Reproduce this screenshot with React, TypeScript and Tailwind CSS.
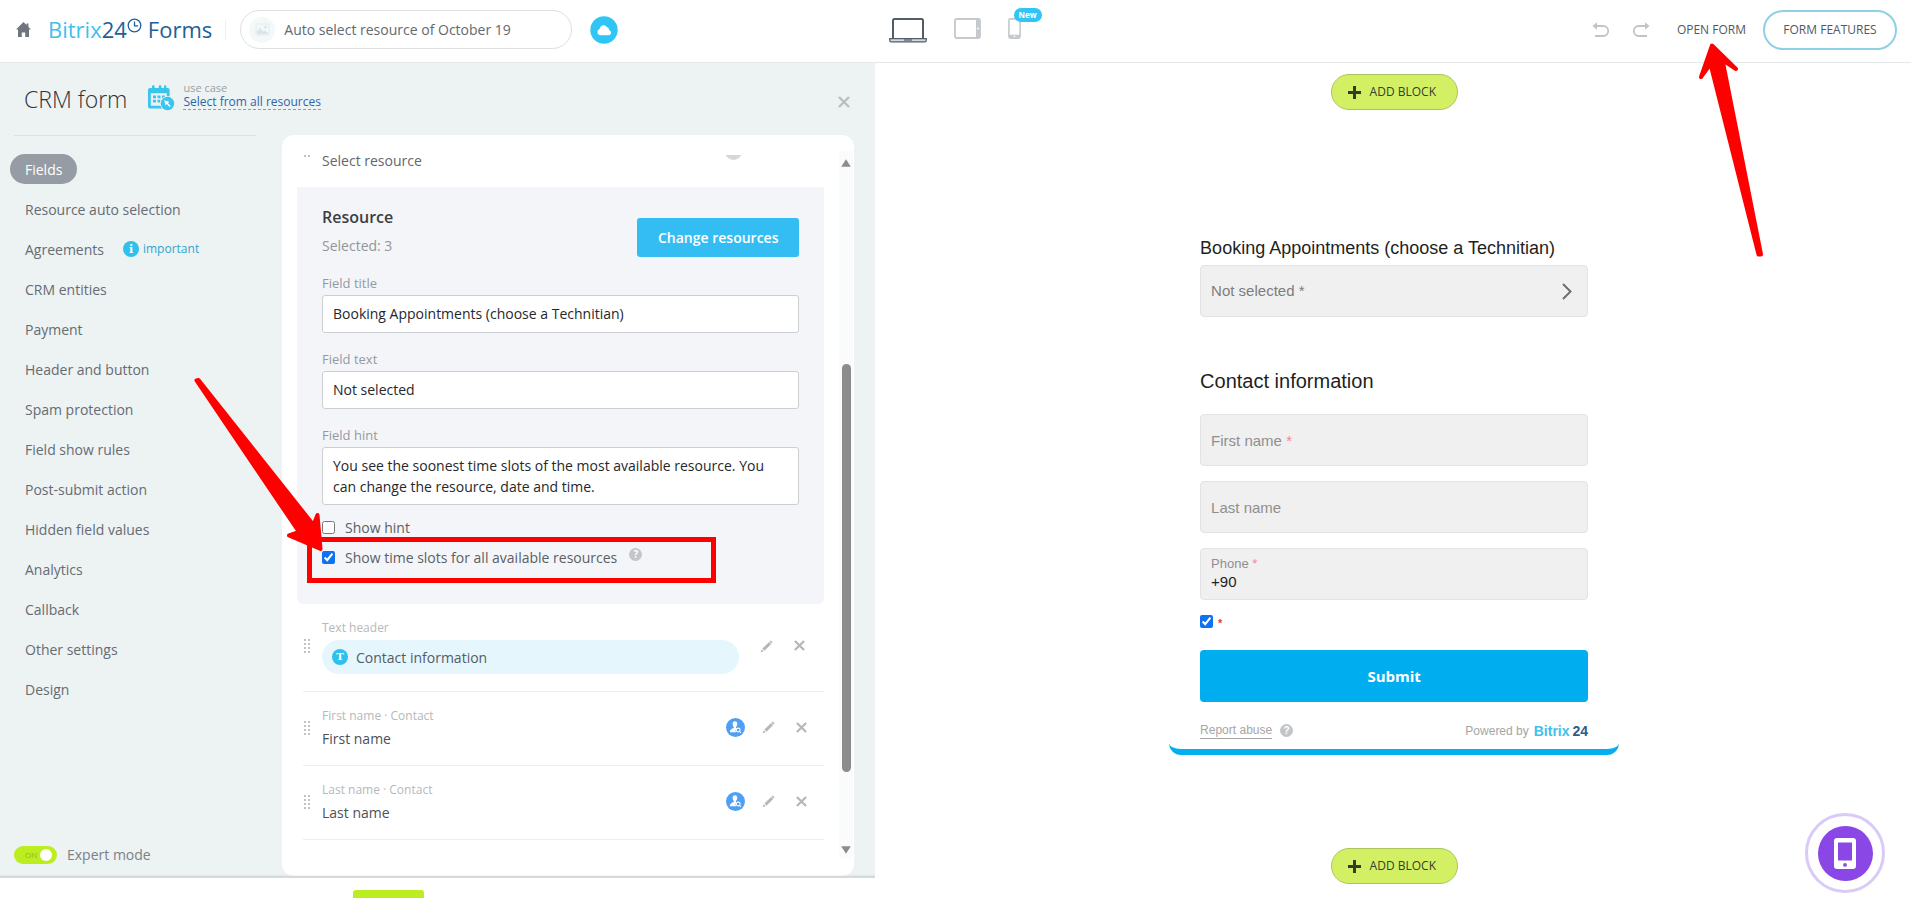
import type { ReactNode } from "react";

const menuTop = ["Resource auto selection"];
const menuRest = [
  "CRM entities",
  "Payment",
  "Header and button",
  "Spam protection",
  "Field show rules",
  "Post-submit action",
  "Hidden field values",
  "Analytics",
  "Callback",
  "Other settings",
  "Design",
];

function HomeIcon() {
  return (
    <svg width="15" height="15" viewBox="0 0 15 15" fill="#6f757d" aria-hidden="true">
      <path d="M7.5 0 0 7.6h2V15h3.8v-4.6h3.4V15H13V7.6h2l-2.6-2.7V1.4h-1.9v1.7z" />
    </svg>
  );
}

function ClockMark() {
  return (
    <svg width="15" height="15" viewBox="0 0 15 15" fill="none" stroke="#215f98" strokeWidth="1.3" aria-hidden="true">
      <circle cx="7.5" cy="7.5" r="6.3" />
      <path d="M7.5 3.6v4.2h3.6" />
    </svg>
  );
}

function PictureIcon() {
  return (
    <svg width="15" height="15" viewBox="0 0 15 15" fill="none" aria-hidden="true">
      <rect x="1" y="2" width="13" height="11" rx="1" stroke="#e3ebee" />
      <circle cx="10.5" cy="5.2" r="1.4" fill="#dbe5e9" />
      <path d="M2 12V9l3-3 3.4 3.6L10 8.4l3 2.6v1z" fill="#dbe5e9" />
    </svg>
  );
}

function CloudBadge() {
  return (
    <svg width="28" height="28" viewBox="0 0 28 28" aria-hidden="true">
      <circle cx="14" cy="14" r="13.7" fill="#2fc6f6" />
      <path d="M10.3 19.3a3.2 3.2 0 0 1-.7-6.2 4 4 0 0 1 7.2-2.2 3.1 3.1 0 0 1 2.3 3 2.8 2.8 0 0 1-.2 5.4z" fill="#fff" />
    </svg>
  );
}

function LaptopIcon() {
  return (
    <svg width="38" height="25" viewBox="0 0 38 25" fill="none" aria-hidden="true">
      <rect x="4" y="1" width="30" height="20" rx="1.5" stroke="#535c69" strokeWidth="2" />
      <path d="M.7 20.7h36.6v1.6a1.6 1.6 0 0 1-1.6 1.6H2.3a1.6 1.6 0 0 1-1.6-1.6z" fill="#d5d8dc" stroke="#535c69" strokeWidth="1.2" />
      <path d="M15 22h8" stroke="#535c69" strokeWidth="1.2" />
    </svg>
  );
}

function TabletIcon() {
  return (
    <svg width="27" height="21" viewBox="0 0 27 21" fill="none" aria-hidden="true">
      <rect x="1" y="1" width="25" height="19" rx="1.5" stroke="#c6c9cd" strokeWidth="1.8" />
      <path d="M22 1h3a1 1 0 0 1 1 1v17a1 1 0 0 1-1 1h-3z" fill="#c6c9cd" />
      <circle cx="24" cy="10.5" r="1" fill="#fff" />
    </svg>
  );
}

function PhoneIcon() {
  return (
    <svg width="13" height="21" viewBox="0 0 13 21" fill="none" aria-hidden="true">
      <rect x=".9" y=".9" width="11.2" height="19.2" rx="1.5" stroke="#c6c9cd" strokeWidth="1.6" />
      <path d="M1 16.8h11V19a1 1 0 0 1-1 1H2a1 1 0 0 1-1-1z" fill="#c6c9cd" />
      <circle cx="6.5" cy="18.4" r=".8" fill="#fff" />
    </svg>
  );
}

function TurnIcon({ flip = false }: { flip?: boolean }) {
  return (
    <svg width="18" height="16" viewBox="0 0 18 16" fill="none" className={flip ? "-scale-x-100" : ""} aria-hidden="true">
      <path d="M3 4h8.2a5 5 0 0 1 0 10H3" stroke="#c0c4c9" strokeWidth="1.8" />
      <path d="M.5 4 5 .3v7.4z" fill="#c0c4c9" />
    </svg>
  );
}

function CalendarIcon() {
  return (
    <svg width="27" height="26" viewBox="0 0 27 26" aria-hidden="true">
      <path
        fillRule="evenodd"
        d="M2 3h2V1.2a1 1 0 0 1 1-1h.6a1 1 0 0 1 1 1V3h4.2V1.2a1 1 0 0 1 1-1h.6a1 1 0 0 1 1 1V3H16V1.2a1 1 0 0 1 1-1h.4a1 1 0 0 1 1 1V3h1.200a2 2 0 0 1 2 2v16.5a2 2 0 0 1-2 2H2a2 2 0 0 1-2-2V5a2 2 0 0 1 2-2zm.8 5.2V20a.8.8 0 0 0 .8.8H18a.8.8 0 0 0 .8-.8V8.2z"
        fill="#3bc4ee"
      />
      <path d="M5 10.5h3v2.7H5zm4.5 0h3v2.7h-3zm4.5 0h3v2.7h-3zM5 14.8h3v2.7H5zm4.5 0h3v2.7h-3z" fill="#3bc4ee" />
      <circle cx="19.5" cy="18.5" r="7.5" fill="#edf2f3" />
      <circle cx="19.5" cy="18.5" r="6.7" fill="#3bc4ee" />
      <path d="m16.2 15.2 5.2 1.6-1.5 1.2 2.8 3-1 1-2.9-2.9-1.2 1.5z" fill="#fff" />
    </svg>
  );
}

function Cross({ className }: { className: string }) {
  return (
    <svg viewBox="0 0 12 12" fill="none" stroke="currentColor" strokeWidth="2.4" className={className} aria-hidden="true">
      <path d="m1 1 10 10M11 1 1 11" />
    </svg>
  );
}

function Pencil() {
  return (
    <svg width="13" height="13" viewBox="0 0 13 13" fill="#b4b7bb" aria-hidden="true">
      <path d="m10.7.4 1.9 1.9-1.1 1.2-2-2zM9.100 1.900l2.100 2.100-6.700 6.700-2.100-2.100zM1.800 9.300l1.900 1.900-3.200 1z" />
    </svg>
  );
}

function Dots({ rows = 4 }: { rows?: number }) {
  const ys = Array.from({ length: rows }, (_, i) => i * 4);
  return (
    <svg width="6" height={rows * 4 - 2} fill="#bfc3c7" aria-hidden="true">
      {ys.map((y) => (
        <g key={y}>
          <rect x="0" y={y} width="2" height="2" />
          <rect x="4" y={y} width="2" height="2" />
        </g>
      ))}
    </svg>
  );
}

function PersonBadge() {
  return (
    <svg width="19" height="19" viewBox="0 0 19 19" aria-hidden="true">
      <circle cx="9.5" cy="9.5" r="9.5" fill="#4f9ff5" />
      <path d="M9 3.2c1.6 0 2.3 1.1 2.3 2.5S10.500 8.600 9.900 9v.8l.5.400a3.300 3.300 0 0 0-.3 4H3.900c0-2.300.8-3.300 3.900-4.300V9c-.6-.4-1.200-1.600-1.200-3.200C6.600 4.300 7.500 3.200 9 3.200z" fill="#fff" />
      <circle cx="12.2" cy="12" r="1.9" fill="none" stroke="#fff" strokeWidth="1.1" />
      <path d="m13.5 13.4 1.4 1.4" stroke="#fff" strokeWidth="1.1" />
    </svg>
  );
}

function HelpDot() {
  return (
    <span className="flex h-[13px] w-[13px] items-center justify-center rounded-full bg-[#c3c5c8] text-[10px] leading-none font-bold text-white">
      ?
    </span>
  );
}

function AddBlock() {
  return (
    <button className="flex h-9 w-[127px] items-center rounded-full border border-[#a9c65c] bg-[#d3f064] pl-4 text-[12px] font-medium text-[#35402a]">
      <svg className="mr-[9px]" width="13" height="13" viewBox="0 0 13 13" stroke="#333a2c" strokeWidth="3" aria-hidden="true">
        <path d="M6.5 0v13M0 6.5h13" />
      </svg>
      ADD BLOCK
    </button>
  );
}

function MenuItem({ children }: { children: ReactNode }) {
  return (
    <li className="flex h-10 items-center">
      <a href="#" className="text-[14px] text-[#666c73]">
        {children}
      </a>
    </li>
  );
}

function NameRow({ name }: { name: string }) {
  return (
    <div className="ml-[6px] flex h-[74px] items-center border-b border-[#eceef0] pb-[2px]">
      <div className="w-[19px] pl-px">
        <Dots />
      </div>
      <div className="flex-1">
        <div className="text-[12px] leading-[22px] text-[#b5b8bc]">{name} · Contact</div>
        <div className="text-[14px] leading-6 text-[#4d5157]">{name}</div>
      </div>
      <div className="flex items-center pr-[17px]">
        <PersonBadge />
        <button aria-label={`Edit ${name}`} className="ml-[17px]">
          <Pencil />
        </button>
        <button aria-label={`Remove ${name}`} className="ml-[21px] text-[#b4b7bb]">
          <Cross className="h-[11px] w-[11px]" />
        </button>
      </div>
    </div>
  );
}

function TopBar() {
  return (
    <header className="flex h-[63px] shrink-0 items-center border-b border-[#e6e9eb] bg-white pb-[3px]">
      <div className="flex flex-1 items-center">
        <a href="#" aria-label="Home" className="ml-4">
          <HomeIcon />
        </a>
        <div className="ml-[17px] flex items-center pb-px text-[22px] leading-none font-medium text-[#215f98]">
          <span>
            <span className="text-[#3fc0ee]">Bitrix</span>24
          </span>
          <span className="pb-2">
            <ClockMark />
          </span>
          <span className="ml-[6px]">Forms</span>
        </div>
        <div className="ml-[13px] h-5 w-px bg-[#eef0f1]" />
        <div className="ml-[14px] flex h-[39px] w-[332px] items-center rounded-full border border-[#dddfe1] pl-2">
          <span className="flex h-[26px] w-[26px] items-center justify-center rounded-full bg-[#f3f8f9]">
            <PictureIcon />
          </span>
          <input
            aria-label="Form name"
            defaultValue="Auto select resource of October 19"
            className="ml-[9px] w-[260px] bg-transparent text-[14px] text-[#63686e] outline-none"
          />
        </div>
        <button aria-label="Cloud" className="ml-[18px]">
          <CloudBadge />
        </button>
      </div>
      <div className="flex items-start gap-[27px] pt-[2px] pl-3">
        <button aria-label="Desktop view">
          <LaptopIcon />
        </button>
        <button aria-label="Tablet view">
          <TabletIcon />
        </button>
        <button aria-label="Phone view" className="relative">
          <PhoneIcon />
          <span className="absolute -top-[10px] left-[6px] flex h-[14px] items-center rounded-full bg-[#2fc6f6] px-[5px] text-[8px] font-bold text-white">
            New
          </span>
        </button>
      </div>
      <div className="flex flex-1 items-center justify-end pr-[14px] text-[12px] font-medium text-[#53585e]">
        <button aria-label="Undo">
          <TurnIcon />
        </button>
        <button aria-label="Redo" className="ml-[22px]">
          <TurnIcon flip />
        </button>
        <a href="#" className="ml-[27px]">
          OPEN FORM
        </a>
        <button className="ml-[17px] h-10 w-[134px] rounded-full border-2 border-[#8fd0e4] text-center">FORM FEATURES</button>
      </div>
    </header>
  );
}

function Sidebar() {
  return (
    <nav aria-label="Form settings" className="flex w-[282px] shrink-0 flex-col">
      <div className="mr-[26px] ml-[14px] border-t border-[#dce2e4]" />
      <ul className="mt-[13px] flex-1 pl-[25px]">
        <li className="-ml-[15px] flex h-10 items-center">
          <a href="#" className="flex h-[30px] items-center rounded-full bg-[#959ca4] px-[15px] text-[14px] text-white">
            Fields
          </a>
        </li>
        {menuTop.map((item) => (
          <MenuItem key={item}>{item}</MenuItem>
        ))}
        <li className="flex h-10 items-center">
          <a href="#" className="text-[14px] text-[#666c73]">
            Agreements
          </a>
          <span className="ml-[19px] flex h-4 w-4 items-center justify-center rounded-full bg-[#2fc0ee] font-['DejaVu_Serif'] text-[11px] leading-none font-bold text-white">
            i
          </span>
          <span className="ml-1 text-[12px] text-[#2fa5d0]">important</span>
        </li>
        {menuRest.map((item) => (
          <MenuItem key={item}>{item}</MenuItem>
        ))}
      </ul>
      <div className="flex h-[43px] items-center pl-[14px]">
        <button
          role="switch"
          aria-checked="true"
          aria-labelledby="expert-mode"
          className="flex h-[18px] w-[43px] items-center justify-between rounded-full bg-[#bbed21] pr-[5px] pl-[11px]"
        >
          <span className="text-[8px] leading-none text-[#93bd18]">ON</span>
          <span className="h-3 w-3 rounded-full bg-white" />
        </button>
        <span id="expert-mode" className="ml-[10px] text-[14px] text-[#7b8187]">
          Expert mode
        </span>
      </div>
    </nav>
  );
}

const editorLabel = "block text-[13px] leading-5 text-[#959a9f]";
const editorInput =
  "block w-full rounded-[3px] border border-[#cbcfd3] bg-white px-[10px] text-[14px] text-[#25282b] outline-none";

function ResourceSettings() {
  return (
    <section className="h-[417px] rounded-b-md bg-[#f4f5f8] px-[25px] pt-[18px]">
      <div className="flex items-center">
        <div className="flex-1">
          <h2 className="text-[16px] leading-6 font-semibold text-[#3b3f44]">Resource</h2>
          <p className="mt-[5px] text-[14px] leading-6 text-[#92969b]">Selected: 3</p>
        </div>
        <button className="mt-3 h-[39px] w-[162px] rounded-[3px] bg-[#34bdf3] text-[14px] font-semibold text-white">
          Change resources
        </button>
      </div>
      <label htmlFor="field-title" className={`${editorLabel} mt-[15px]`}>
        Field title
      </label>
      <input
        id="field-title"
        defaultValue="Booking Appointments (choose a Technitian)"
        className={`${editorInput} mt-[2px] h-[38px] pb-px`}
      />
      <label htmlFor="field-text" className={`${editorLabel} mt-4`}>
        Field text
      </label>
      <input id="field-text" defaultValue="Not selected" className={`${editorInput} mt-[2px] h-[38px] pb-px`} />
      <label htmlFor="field-hint" className={`${editorLabel} mt-4`}>
        Field hint
      </label>
      <textarea
        id="field-hint"
        defaultValue="You see the soonest time slots of the most available resource. You can change the resource, date and time."
        className={`${editorInput} mt-[2px] h-[58px] resize-none overflow-hidden py-[7px] leading-[21px]`}
      />
      <div className="mt-[10px] flex h-6 items-center">
        <input id="show-hint" type="checkbox" className="h-[13px] w-[13px]" />
        <label htmlFor="show-hint" className="ml-[10px] text-[14px] text-[#5a5f65]">
          Show hint
        </label>
      </div>
      <div className="relative mt-[6px] flex h-6 items-center">
        <input id="show-slots" type="checkbox" defaultChecked className="h-[13px] w-[13px] accent-[#0d73f2]" />
        <label htmlFor="show-slots" className="ml-[10px] text-[14px] text-[#5a5f65]">
          Show time slots for all available resources
        </label>
        <span className="mb-[6px] ml-3">
          <HelpDot />
        </span>
        <div className="pointer-events-none absolute -top-[8px] -left-[15px] h-[46px] w-[409px] border-[5px] border-[#ff0000]" />
      </div>
    </section>
  );
}

function EditorCard() {
  return (
    <div className="flex min-w-0 flex-1 overflow-hidden rounded-xl bg-white pt-4 pb-[17px] pl-[15px]">
      <div className="min-w-0 flex-1 overflow-hidden">
        <div className="flex h-9 items-start pl-[7px]">
          <div className="w-[18px] pt-1">
            <Dots rows={1} />
          </div>
          <div className="flex-1 text-[14px] leading-5 text-[#62676d]">Select resource</div>
          <div className="mt-1 mr-[82px] flex h-[5px] items-end overflow-hidden">
            <div className="h-[17px] w-[17px] rounded-full bg-[#d5d7d9]" />
          </div>
        </div>
        <ResourceSettings />
        <div className="ml-[6px] flex h-[88px] border-b border-[#eceef0]">
          <div className="w-[19px] pt-[35px] pl-px">
            <Dots />
          </div>
          <div className="flex-1 pt-[13px]">
            <div className="mb-px text-[12px] leading-[22px] text-[#b5b8bc]">Text header</div>
            <div className="flex h-[34px] items-center rounded-full bg-[#e5f6fd] pl-[10px]">
              <span className="flex h-4 w-4 items-center justify-center rounded-full bg-[#2fc0ee] font-['DejaVu_Serif'] text-[10px] leading-none font-bold text-white">
                T
              </span>
              <span className="ml-2 text-[14px] text-[#565c63]">Contact information</span>
            </div>
          </div>
          <div className="flex items-start pt-9 pr-[19px] pl-[21px]">
            <button aria-label="Edit text header">
              <Pencil />
            </button>
            <button aria-label="Remove text header" className="ml-[21px] text-[#b4b7bb]">
              <Cross className="h-[11px] w-[11px]" />
            </button>
          </div>
        </div>
        <NameRow name="First name" />
        <NameRow name="Last name" />
      </div>
      <div className="mr-px ml-[15px] flex w-[14px] flex-col items-center bg-[#fafbfb] pt-2 pb-[5px]">
        <svg width="10" height="8" viewBox="0 0 10 8" fill="#8c8c8c" aria-hidden="true">
          <path d="M5 .3 9.8 7.7H.2z" />
        </svg>
        <div className="mt-[197px] h-[408px] w-[9px] rounded-full bg-[#8c8c8c]" />
        <svg className="mt-auto" width="10" height="8" viewBox="0 0 10 8" fill="#8c8c8c" aria-hidden="true">
          <path d="M5 7.7.2.3h9.6z" />
        </svg>
      </div>
    </div>
  );
}

function EditorPanel() {
  return (
    <aside className="relative flex w-[45.8%] min-w-[800px] shrink-0 flex-col bg-[#edf2f3]">
      <div className="flex h-[72px] items-center pr-[25px] pl-6">
        <h1 className="text-[23px] font-light text-[#2f3338]">CRM form</h1>
        <div className="ml-[21px] pb-[3px]">
          <CalendarIcon />
        </div>
        <div className="ml-[8px] flex-1 pb-[7px]">
          <div className="text-[11px] leading-[14px] text-[#9aa0a5]">use case</div>
          <a href="#" className="block w-fit border-b border-dashed border-[#7d9dc8] text-[12px] leading-[14px] text-[#2d66ab]">
            Select from all resources
          </a>
        </div>
        <button aria-label="Close panel" className="pt-[5px] text-[#b9bfc3]">
          <Cross className="h-3 w-3" />
        </button>
      </div>
      <div className="flex min-h-0 flex-1 pr-[21px]">
        <Sidebar />
        <EditorCard />
      </div>
      <div className="h-[22px] shrink-0 overflow-hidden border-t-2 border-[#d5d9db] bg-white pt-3 shadow-[1px_0_2px_rgba(0,0,0,0.12)]">
        <button aria-label="Save" className="ml-[353px] block h-10 w-[71px] rounded-[3px] bg-[#bbed21]" />
      </div>
      <svg className="pointer-events-none absolute top-[314px] left-[194px]" width="130" height="175" viewBox="194 377 130 175" fill="#ff0000" stroke="#ff0000" strokeWidth="4" strokeLinejoin="round" aria-hidden="true">
        <path d="M196.5 380.500 299 532 289 535.500 320.500 549 317.500 515 313.500 525 198.500 380z" />
      </svg>
    </aside>
  );
}

const previewField = "h-[52px] w-full rounded border border-[#e3e3e3] bg-[#f0f0f0]";

function Preview() {
  return (
    <main className="relative flex flex-1 flex-col items-center bg-white pt-[11px] pb-[14px] pl-[2px]">
      <AddBlock />
      <form className="mt-[127px] w-[450px] rounded-b-xl border-b-[6px] border-[#05aeef] px-[31px] pb-[10px] font-['Liberation_Sans',sans-serif]">
        <div className="text-[18px] leading-[22px] text-[#1f1f1f]">Booking Appointments (choose a Technitian)</div>
        <button type="button" className={`${previewField} mt-[6px] flex items-center justify-between pr-[15px] pl-[10px] text-[15px] text-[#7d7d7d]`}>
          Not selected *
          <svg width="10" height="17" viewBox="0 0 10 17" fill="none" stroke="#6e6e6e" strokeWidth="2" aria-hidden="true">
            <path d="m1 1 7.5 7.5L1 16" />
          </svg>
        </button>
        <h2 className="mt-[52px] text-[20px] leading-6 text-[#1f1f1f]">Contact information</h2>
        <div className="mt-[21px] flex flex-col gap-[15px]">
          <div className="relative">
            <input id="pf-first" className={previewField} />
            <label htmlFor="pf-first" className="pointer-events-none absolute top-[17px] left-[11px] text-[15px] leading-5 text-[#8f8f8f]">
              First name <span className="text-[#f0879b]">*</span>
            </label>
          </div>
          <div className="relative">
            <input id="pf-last" className={previewField} />
            <label htmlFor="pf-last" className="pointer-events-none absolute top-[17px] left-[11px] text-[15px] leading-5 text-[#8f8f8f]">
              Last name
            </label>
          </div>
          <div className="relative">
            <input id="pf-phone" defaultValue="+90" className={`${previewField} px-[10px] pt-[14px] text-[15px] text-[#1f1f1f]`} />
            <label htmlFor="pf-phone" className="pointer-events-none absolute top-2 left-[11px] text-[13px] leading-4 text-[#8f8f8f]">
              Phone <span className="text-[#f0879b]">*</span>
            </label>
          </div>
        </div>
        <div className="mt-[15px] flex h-[13px] items-center gap-[5px]">
          <input id="pf-consent" type="checkbox" defaultChecked className="h-[13px] w-[13px] accent-[#0d73f2]" />
          <label htmlFor="pf-consent" className="pt-[3px] text-[11px] leading-none font-bold text-[#e33b3b]">
            *
          </label>
        </div>
        <button type="button" className="mt-[22px] h-[52px] w-full rounded bg-[#00aeef] font-['Open_Sans',sans-serif] text-[15px] font-bold text-white">
          Submit
        </button>
        <div className="mt-[20px] flex items-center text-[12px] leading-4 text-[#a5a5a5]">
          <a href="#" className="border-b border-[#a5a5a5]">
            Report abuse
          </a>
          <span className="ml-2">
            <HelpDot />
          </span>
          <span className="ml-auto">Powered by</span>
          <span className="ml-[5px] flex gap-[3px] text-[14px] font-bold text-[#2b5d8c]">
            <span className="text-[#41c0ea]">Bitrix</span>
            <span>24</span>
          </span>
        </div>
      </form>
      <div className="mt-auto">
        <AddBlock />
      </div>
      <button
        aria-label="Mobile preview"
        className="absolute right-[26px] bottom-[5px] flex h-20 w-20 items-center justify-center rounded-full border-[3px] border-[#d9cbf5] bg-white"
      >
        <span className="flex h-[55px] w-[55px] items-center justify-center rounded-full bg-[#8b46e6]">
          <svg width="22" height="31" viewBox="0 0 22 31" aria-hidden="true">
            <path fillRule="evenodd" d="M3 0h16a3 3 0 0 1 3 3v25a3 3 0 0 1-3 3H3a3 3 0 0 1-3-3V3a3 3 0 0 1 3-3zm1 4.5v18h14v-18zM11 25a1.9 1.9 0 1 0 0 3.800 1.900 1.900 0 0 0 0-3.800z" fill="#fff" />
          </svg>
        </span>
      </button>
      <svg className="pointer-events-none absolute -top-[21px] right-[147px]" width="66" height="218" viewBox="1698 42 66 218" fill="#ff0000" stroke="#ff0000" strokeWidth="4" strokeLinejoin="round" aria-hidden="true">
        <path d="M1712 45.5 1701 77 1710.5 64 1758.5 254.5 1761 254.5 1722.5 60 1736 69z" />
      </svg>
    </main>
  );
}

export default function App() {
  return (
    <div className="flex h-screen flex-col overflow-hidden bg-white font-['Open_Sans',sans-serif]">
      <TopBar />
      <div className="flex min-h-0 flex-1">
        <EditorPanel />
        <Preview />
      </div>
    </div>
  );
}
